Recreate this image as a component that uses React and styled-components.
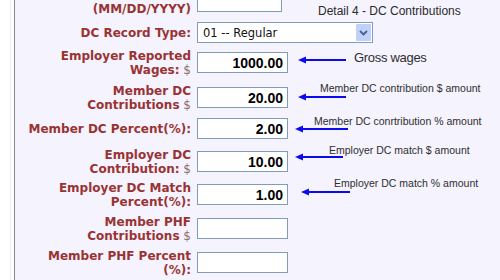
import styled, { createGlobalStyle } from "styled-components";

const GlobalStyle = createGlobalStyle`
  html, body {
    margin: 0;
    padding: 0;
    background: #ffffff;
    overflow: hidden;
  }
`;

const fields = [
  {
    id: "date",
    label: ["Period End Date", "(MM/DD/YYYY)"],
    width: 85,
    value: "",
    gap: 0,
    heading: "Detail 4 - DC Contributions",
  },
  { id: "type", label: ["DC Record Type:"], select: "01 -- Regular", gap: 10 },
  {
    id: "wages",
    label: ["Employer Reported", "Wages:"],
    unit: true,
    value: "1000.00",
    gap: 9,
    note: { ax: 283, ay: 8, len: 48, tx: 339, ty: -1, big: true, text: "Gross wages" },
  },
  {
    id: "memberDc",
    label: ["Member DC", "Contributions"],
    unit: true,
    value: "20.00",
    gap: 14,
    note: { ax: 283, ay: 10, len: 48, tx: 305, ty: -5, text: "Member DC contribution $ amount" },
  },
  {
    id: "memberPct",
    label: ["Member DC Percent(%):"],
    value: "2.00",
    gap: 10,
    note: { ax: 280, ay: 11, len: 53, tx: 299, ty: -3, text: "Member DC conrtribution % amount" },
  },
  {
    id: "employerDc",
    label: ["Employer DC", "Contribution:"],
    unit: true,
    value: "10.00",
    gap: 12,
    note: { ax: 280, ay: 6, len: 48, tx: 314, ty: -7, text: "Employer DC match $ amount" },
  },
  {
    id: "employerPct",
    label: ["Employer DC Match", "Percent(%):"],
    value: "1.00",
    gap: 12,
    note: { ax: 286, ay: 8, len: 49, tx: 319, ty: -7, text: "Employer DC match % amount" },
  },
  { id: "phf", label: ["Member PHF", "Contributions"], unit: true, value: "", gap: 13 },
  { id: "phfPct", label: ["Member PHF Percent", "(%):"], value: "", gap: 13 },
];

function Arrow({ len }) {
  return (
    <svg width={len} height="10" viewBox={`0 0 ${len} 10`}>
      <line x1="6" y1="5" x2={len} y2="5" stroke="#0a0af0" strokeWidth="2.2" />
      <polygon points="0,5 8,1.5 8,8.5" fill="#0a0af0" />
    </svg>
  );
}

function Row({ field }) {
  const { label, unit, note } = field;
  return (
    <FieldRow $gap={field.gap}>
      <Label>
        {label.map((line, i) => (
          <span key={i}>
            {i > 0 && <br />}
            {line}
            {unit && i === label.length - 1 && <Unit> $</Unit>}
          </span>
        ))}
      </Label>
      {field.select ? (
        <Select>
          <SelectText>{field.select}</SelectText>
          <DropButton>
            <svg width="9" height="6" viewBox="0 0 9 6">
              <path d="M1 1 L4.5 4.5 L8 1" fill="none" stroke="#4a5f8c" strokeWidth="1.8" />
            </svg>
          </DropButton>
        </Select>
      ) : (
        <Input $width={field.width} defaultValue={field.value} readOnly />
      )}
      {field.heading && <Heading>{field.heading}</Heading>}
      {note && (
        <>
          <ArrowMark $x={note.ax} $y={note.ay}>
            <Arrow len={note.len} />
          </ArrowMark>
          <Caption $x={note.tx} $y={note.ty} $big={note.big}>
            {note.text}
          </Caption>
        </>
      )}
    </FieldRow>
  );
}

export default function App() {
  return (
    <Page>
      <GlobalStyle />
      <Gutter />
      <Panel>
        <Form>
          {fields.map((f) => (
            <Row key={f.id} field={f} />
          ))}
        </Form>
      </Panel>
    </Page>
  );
}

const Page = styled.div`
  display: flex;
  width: 500px;
  height: 280px;
  overflow: hidden;
  background: #ffffff;
`;

const Gutter = styled.div`
  width: 10px;
  flex: none;
  border-right: 1px solid #ececf4;
  margin-right: 3px;
`;

const Panel = styled.div`
  flex: 1;
  height: 280px;
  background: #f5f3fe;
  border-left: 1px solid #8a8a8e;
  overflow: hidden;
`;

const Form = styled.div`
  display: flex;
  flex-direction: column;
  margin-top: -9px;
`;

const FieldRow = styled.div`
  position: relative;
  display: flex;
  align-items: center;
  height: 21px;
  margin-top: ${(p) => p.$gap}px;
`;

const Label = styled.div`
  width: 176px;
  flex: none;
  margin-right: 6px;
  text-align: right;
  font-family: "DejaVu Sans", Verdana, sans-serif;
  font-weight: bold;
  font-size: 12px;
  line-height: 14px;
  color: #993333;
  white-space: nowrap;
`;

const Unit = styled.span`
  font-weight: normal;
  color: #8d6c6c;
`;

const Input = styled.input`
  box-sizing: border-box;
  width: ${(p) => p.$width || 91}px;
  height: 21px;
  margin: 0;
  padding: 0 4px 0 2px;
  border: 1px solid #7f9db9;
  background: #ffffff;
  font-family: "Liberation Sans", Arial, sans-serif;
  font-weight: bold;
  font-size: 14px;
  color: #000000;
  text-align: right;
  outline: none;
`;

const Select = styled.div`
  box-sizing: border-box;
  display: flex;
  align-items: center;
  width: 176px;
  height: 21px;
  border: 1px solid #7f9db9;
  background: #ffffff;
  padding: 1px;
`;

const SelectText = styled.span`
  flex: 1;
  padding-left: 4px;
  font-family: "DejaVu Sans", Tahoma, sans-serif;
  font-size: 11.5px;
  color: #111111;
`;

const DropButton = styled.span`
  width: 15px;
  height: 17px;
  display: flex;
  align-items: center;
  justify-content: center;
  background: #bfd0f9;
  border-radius: 1px;
`;

const Heading = styled.div`
  align-self: flex-end;
  margin: 0 0 -6px 36px;
  font-family: "Liberation Sans", Arial, sans-serif;
  font-size: 12px;
  line-height: 14px;
  color: #2a2a2a;
  white-space: nowrap;
`;

const ArrowMark = styled.div`
  position: absolute;
  left: ${(p) => p.$x}px;
  top: ${(p) => p.$y - 5}px;
  height: 10px;
  line-height: 0;
`;

const Caption = styled.div`
  position: absolute;
  left: ${(p) => p.$x}px;
  top: ${(p) => p.$y}px;
  font-family: "Liberation Sans", Arial, sans-serif;
  font-size: ${(p) => (p.$big ? "13px" : "10.5px")};
  letter-spacing: ${(p) => (p.$big ? "-0.3px" : "0")};
  line-height: ${(p) => (p.$big ? "14px" : "12px")};
  color: #2e2e2e;
  white-space: nowrap;
`;
